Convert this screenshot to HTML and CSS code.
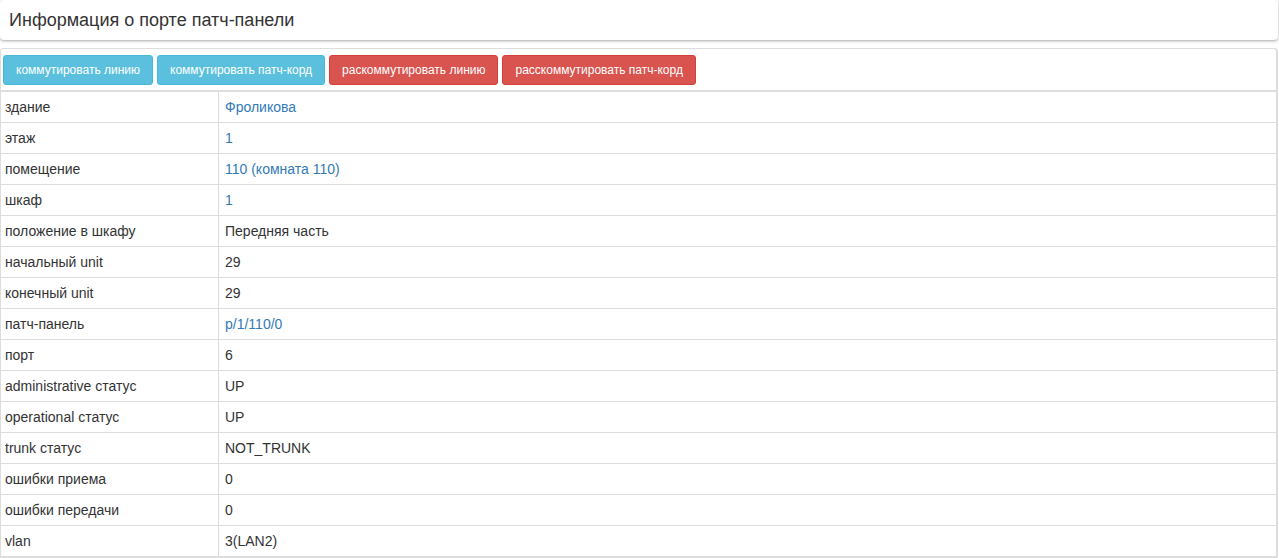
FILE: index.html
```html
<!DOCTYPE html>
<html lang="ru">
<head>
<meta charset="utf-8">
<title>Информация о порте патч-панели</title>
<link rel="stylesheet" href="styles.css">
</head>
<body>
<div class="page">
  <div class="header-panel">
    <h1 class="title">Информация о порте патч-панели</h1>
  </div>
  <div class="card">
    <div class="toolbar">
      <button class="btn btn-info">коммутировать линию</button>
      <button class="btn btn-info">коммутировать патч-корд</button>
      <button class="btn btn-danger">раскоммутировать линию</button>
      <button class="btn btn-danger">расскоммутировать патч-корд</button>
    </div>
    <table class="info-table">
      <tbody>
        <tr><td class="key">здание</td><td class="val"><a href="#">Фроликова</a></td></tr>
        <tr><td class="key">этаж</td><td class="val"><a href="#">1</a></td></tr>
        <tr><td class="key">помещение</td><td class="val"><a href="#">110 (комната 110)</a></td></tr>
        <tr><td class="key">шкаф</td><td class="val"><a href="#">1</a></td></tr>
        <tr><td class="key">положение в шкафу</td><td class="val">Передняя часть</td></tr>
        <tr><td class="key">начальный unit</td><td class="val">29</td></tr>
        <tr><td class="key">конечный unit</td><td class="val">29</td></tr>
        <tr><td class="key">патч-панель</td><td class="val"><a href="#">p/1/110/0</a></td></tr>
        <tr><td class="key">порт</td><td class="val">6</td></tr>
        <tr><td class="key">administrative статус</td><td class="val">UP</td></tr>
        <tr><td class="key">operational статус</td><td class="val">UP</td></tr>
        <tr><td class="key">trunk статус</td><td class="val">NOT_TRUNK</td></tr>
        <tr><td class="key">ошибки приема</td><td class="val">0</td></tr>
        <tr><td class="key">ошибки передачи</td><td class="val">0</td></tr>
        <tr><td class="key">vlan</td><td class="val">3(LAN2)</td></tr>
      </tbody>
    </table>
  </div>
</div>
</body>
</html>
```

FILE: styles.css
```css
html, body {
  margin: 0;
  padding: 0;
  background: #ffffff;
}
body {
  font-family: "Liberation Sans", Arial, sans-serif;
  font-size: 14px;
  color: #333333;
}
.page {
  width: 1278px;
}
.header-panel {
  background: #ffffff;
  border-radius: 4px;
  box-shadow: 0 1px 3px rgba(0, 0, 0, 0.35);
  height: 40px;
  display: flex;
  align-items: center;
  padding: 0 9px;
  box-sizing: border-box;
  margin-bottom: 8px;
}
.title {
  margin: 0;
  font-size: 18px;
  font-weight: normal;
  color: #333333;
  line-height: 20px;
}
.card {
  border: 1px solid #dddddd;
  border-right: 2px solid #dddddd;
  border-bottom: none;
  border-radius: 4px 4px 0 0;
  background: #ffffff;
}
.toolbar {
  display: flex;
  gap: 4px;
  padding: 6px 3px 5px 2px;
  border-bottom: 2px solid #dddddd;
}
.btn {
  font-family: "Liberation Sans", Arial, sans-serif;
  font-size: 12px;
  line-height: 18px;
  padding: 5px 12px;
  border-radius: 3px;
  border: 1px solid transparent;
  color: #ffffff;
  cursor: pointer;
}
.btn-info {
  background: #5bc0de;
  border-color: #46b8da;
}
.btn-danger {
  background: #d9534f;
  border-color: #d43f3a;
}
.info-table {
  width: 100%;
  border-collapse: collapse;
  border-bottom: 3px solid #dddddd;
}
.info-table td {
  padding: 5px;
  line-height: 20px;
  border-top: 1px solid #dddddd;
}
.info-table tr:first-child td {
  border-top: none;
}
.info-table .key {
  width: 208px;
  padding-left: 4px;
  border-right: 1px solid #dddddd;
}
.info-table .val {
  padding-left: 6px;
}
a {
  color: #337ab7;
  text-decoration: none;
}
```
